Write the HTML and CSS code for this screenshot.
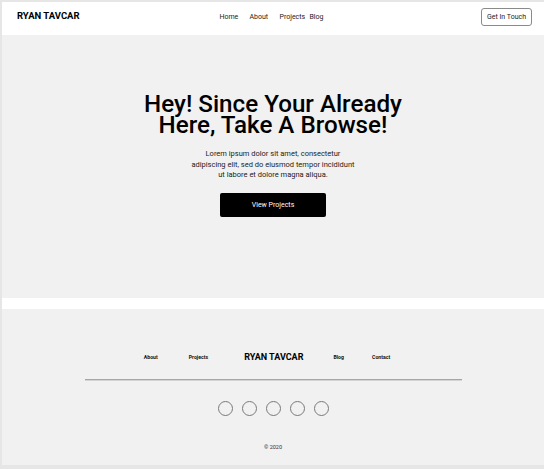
FILE: index.html
```html
<!DOCTYPE html>
<html lang="en">
<head>
<meta charset="utf-8">
<title>Ryan Tavcar</title>
<link rel="stylesheet" href="styles.css">
</head>
<body>
<div class="page">
  <header class="header">
    <div class="logo">RYAN TAVCAR</div>
    <nav class="nav">
      <a href="#">Home</a>
      <a href="#">About</a>
      <a href="#">Projects</a>
      <a href="#" class="short">Blog</a>
    </nav>
    <div class="cta"><a href="#" class="btn-outline">Get In Touch</a></div>
  </header>

  <section class="hero">
    <h1 class="hero-title">Hey! Since Your Already<br>Here, Take A Browse!</h1>
    <p class="hero-text">Lorem ipsum dolor sit amet, consectetur<br>adipiscing elit, sed do eiusmod tempor incididunt<br>ut labore et dolore magna aliqua.</p>
    <a href="#" class="btn-dark">View Projects</a>
  </section>

  <div class="spacer"></div>

  <footer class="footer">
    <nav class="footer-nav">
      <a href="#" class="f-about">About</a>
      <a href="#" class="f-projects">Projects</a>
      <span class="footer-logo">RYAN TAVCAR</span>
      <a href="#" class="f-blog">Blog</a>
      <a href="#">Contact</a>
    </nav>
    <hr class="footer-rule">
    <div class="socials">
      <span class="circle"></span>
      <span class="circle"></span>
      <span class="circle"></span>
      <span class="circle"></span>
      <span class="circle"></span>
    </div>
    <div class="copy">© 2020</div>
  </footer>
</div>
</body>
</html>
```

FILE: styles.css
```css
* { box-sizing: border-box; }

html, body {
  margin: 0;
  padding: 0;
}

body {
  background: #e6e6e6;
  font-family: Roboto, "Liberation Sans", sans-serif;
  color: #111;
  padding: 2px 0 4px 2px;
}

a { color: inherit; text-decoration: none; }

.page {
  width: 542px;
}

.header {
  height: 33px;
  background: #fff;
  display: grid;
  grid-template-columns: 1fr auto 1fr;
  align-items: center;
  padding: 0 12px 0 15px;
}

.logo {
  font-weight: 700;
  font-size: 9.5px;
  margin-top: -7px;
  color: #000;
}

.nav {
  display: flex;
  font-size: 7px;
  margin-left: -2px;
  margin-top: -4px;
  color: #222;
}

.nav a { width: 30px; }
.nav a.short { width: 18px; }

.cta {
  display: flex;
  justify-content: flex-end;
}

.btn-outline {
  display: inline-flex;
  align-items: center;
  justify-content: center;
  width: 51px;
  height: 18px;
  border: 1px solid #8a8a8a;
  border-radius: 3px;
  font-size: 7px;
  color: #222;
  margin-top: -4px;
}

.hero {
  height: 263px;
  background: #f1f1f1;
  display: flex;
  flex-direction: column;
  align-items: center;
  padding-top: 59px;
}

.hero-title {
  margin: 0;
  font-weight: 500;
  font-size: 24.2px;
  line-height: 21px;
  text-align: center;
  color: #000;
}

.hero-text {
  margin: 13px 0 0;
  font-size: 7.5px;
  line-height: 10.5px;
  text-align: center;
  color: #222;
}

.btn-dark {
  margin-top: 12px;
  width: 106px;
  height: 24px;
  background: #000;
  color: #fff;
  border-radius: 2px;
  display: flex;
  align-items: center;
  justify-content: center;
  font-size: 7px;
}

.spacer {
  height: 11px;
  background: #fff;
}

.footer {
  height: 156px;
  background: #f1f1f1;
  display: flex;
  flex-direction: column;
  align-items: center;
  padding-top: 42px;
}

.footer-nav {
  display: flex;
  align-items: center;
  gap: 30px;
  font-size: 5.2px;
  font-weight: 700;
  color: #111;
  height: 12px;
  padding-right: 12px;
}

.footer-nav .f-about { margin-right: 1px; }
.footer-nav .f-projects { margin-right: 6px; }
.footer-nav .f-blog { margin-right: -2px; }

.footer-logo {
  font-size: 9px;
  font-weight: 700;
  color: #000;
}

.footer-rule {
  margin: 16px 0 0;
  width: 377px;
  border: 0;
  height: 2px;
  background: #a6a6a6;
  border-bottom: 1px solid #d4d4d4;
}

.socials {
  display: flex;
  gap: 9px;
  margin-top: 20px;
}

.circle {
  width: 15px;
  height: 15px;
  border: 1px solid #7a7a7a;
  border-radius: 50%;
}

.copy {
  margin-top: 28px;
  font-size: 5.5px;
  color: #333;
}
```
